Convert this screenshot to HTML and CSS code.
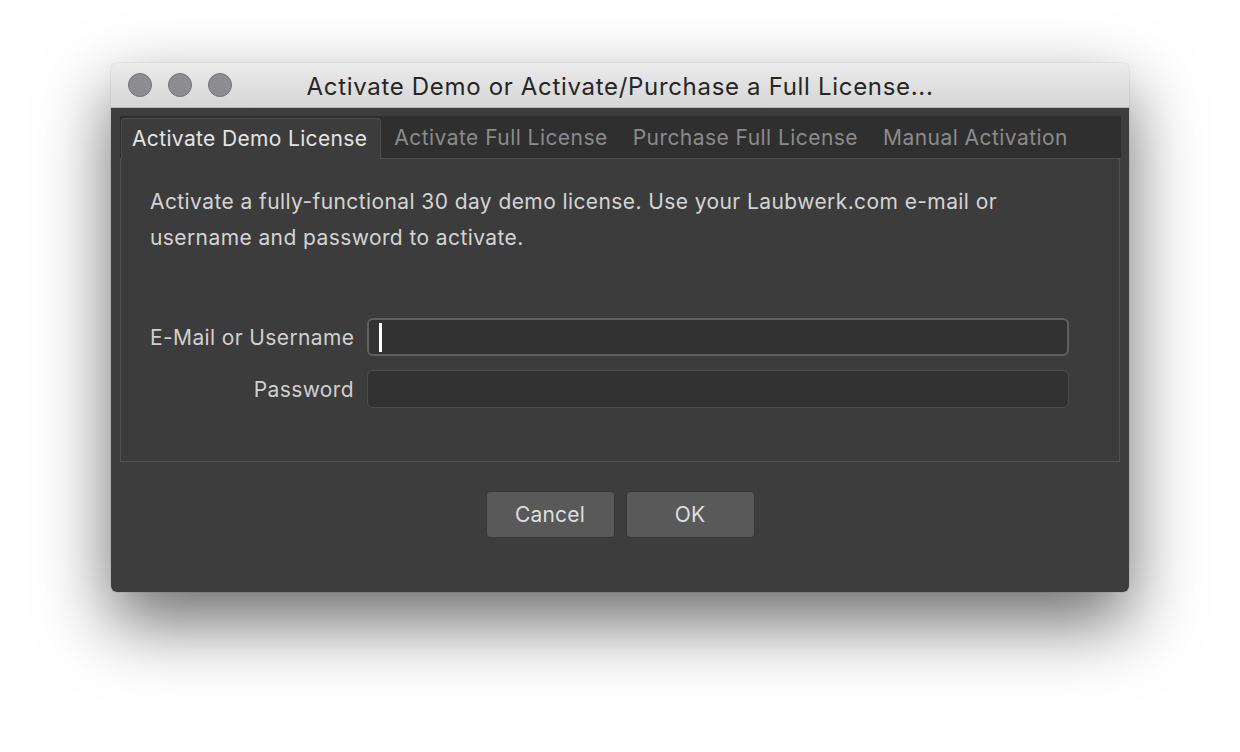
FILE: index.html
```html
<!DOCTYPE html>
<html>
<head>
<meta charset="utf-8">
<link rel="stylesheet" href="styles.css">
</head>
<body>
<div class="window">
  <div class="titlebar">
    <div class="lights">
      <span class="light"></span><span class="light"></span><span class="light"></span>
    </div>
    <div class="title">Activate Demo or Activate/Purchase a Full License...</div>
  </div>
  <div class="content">
    <div class="tabs">
      <div class="tab active">Activate Demo License</div>
      <div class="tab">Activate Full License</div>
      <div class="tab">Purchase Full License</div>
      <div class="tab">Manual Activation</div>
    </div>
    <div class="panel">
      <p class="desc">Activate a fully-functional 30 day demo license. Use your Laubwerk.com e-mail or username and password to activate.</p>
      <div class="form">
        <label class="label">E-Mail or Username</label>
        <div class="input focused"><span class="caret"></span></div>
        <label class="label">Password</label>
        <div class="input"></div>
      </div>
    </div>
    <div class="buttons">
      <div class="btn">Cancel</div>
      <div class="btn">OK</div>
    </div>
  </div>
</div>
</body>
</html>
```

FILE: styles.css
```css
html, body {
  margin: 0;
  padding: 0;
  background: #ffffff;
}
body {
  width: 1240px;
  height: 752px;
  overflow: hidden;
  font-family: "Inter", "Noto Sans", "Liberation Sans", sans-serif;
}
.window {
  margin: 63px 0 0 111px;
  width: 1018px;
  height: 529px;
  border-radius: 6px;
  overflow: hidden;
  display: flex;
  flex-direction: column;
  box-shadow: 0 30px 70px rgba(0,0,0,0.58), 0 0 1px rgba(0,0,0,0.45);
}
.titlebar {
  height: 44px;
  flex: none;
  display: flex;
  align-items: center;
  position: relative;
  background: linear-gradient(#ebebeb, #d6d6d6);
  border-bottom: 1px solid #b9b9b9;
}
.lights {
  display: flex;
  gap: 16px;
  padding-left: 17px;
  position: absolute;
  left: 0;
  top: 10px;
}
.light {
  width: 22px;
  height: 22px;
  border-radius: 50%;
  background: #8d8c90;
  border: 1px solid #747377;
}
.title {
  flex: 1;
  text-align: center;
  font-size: 24px;
  color: #262626;
  letter-spacing: 0.68px;
  padding-top: 3px;
}
.content {
  flex: 1;
  background: #3d3d3d;
  padding: 8px 0 0 9px;
  display: flex;
  flex-direction: column;
}
.tabs {
  width: 1001px;
  height: 42px;
  background: #2f2f2f;
  display: flex;
  align-items: flex-end;
  box-sizing: border-box;
  padding-left: 1px;
}
.tab {
  height: 40px;
  box-sizing: border-box;
  padding: 0 12px 2px 13px;
  display: flex;
  align-items: center;
  font-size: 21px;
  color: #8b8b8b;
  letter-spacing: 0.45px;
}
.tab.active {
  background: #3c3c3c;
  color: #e4e4e4;
  border: 1px solid #4c4c4c;
  border-bottom: none;
  border-radius: 4px 4px 0 0;
  padding: 0 13px 2px 10px;
  position: relative;
  margin-bottom: -1px;
  height: 41px;
  z-index: 1;
  letter-spacing: 0.35px;
}
.panel {
  width: 1000px;
  height: 304px;
  box-sizing: border-box;
  border: 1px solid #505050;
  background: #3c3c3c;
  padding: 24px 50px 0 29px;
}
.desc {
  margin: 0;
  max-width: 900px;
  font-size: 21px;
  letter-spacing: 0.41px;
  line-height: 36px;
  color: #d4d4d4;
  padding-top: 1px;
}
.form {
  margin-top: 62px;
  display: grid;
  grid-template-columns: 204px 1fr;
  column-gap: 13px;
  row-gap: 14px;
  align-items: center;
}
.label {
  text-align: right;
  font-size: 21px;
  letter-spacing: 0.38px;
  color: #d0d0d0;
  white-space: nowrap;
}
.input {
  height: 38px;
  box-sizing: border-box;
  border: 1px solid #4c4c4c;
  border-radius: 6px;
  background: #323232;
  display: flex;
  align-items: center;
  padding-left: 11px;
}
.input.focused {
  border: 2px solid #5f5f5f;
  padding-left: 10px;
}
.caret {
  width: 3px;
  height: 29px;
  background: #ffffff;
}
.buttons {
  display: flex;
  justify-content: center;
  gap: 11px;
  margin-top: 29px;
  padding-right: 9px;
}
.btn {
  width: 129px;
  height: 47px;
  box-sizing: border-box;
  background: #595959;
  border: 1px solid #363636;
  border-radius: 4px;
  display: flex;
  align-items: center;
  justify-content: center;
  font-size: 21px;
  letter-spacing: 0.2px;
  color: #dedede;
}
```
